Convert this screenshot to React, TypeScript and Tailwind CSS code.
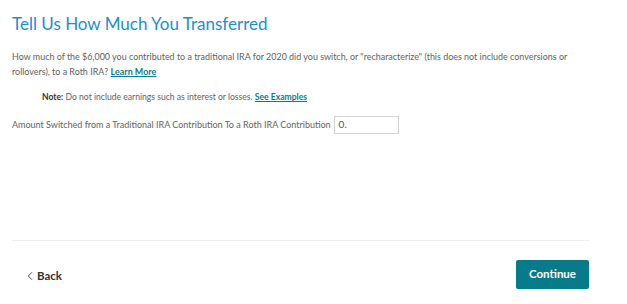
import { ChevronLeft } from 'lucide-react';

export default function App() {
  return (
    <div className="flex h-[304px] w-[627px] flex-col bg-white font-['Lato',sans-serif] text-[#626262]">
      <div className="flex-1 px-3 pt-[12px]">
        <h1 className="text-[17px] leading-6 font-normal text-[#1d8dd3]">
          Tell Us How Much You Transferred
        </h1>
        <p className="mt-[13px] w-[580px] text-[8.95px] leading-[15px]">
          How much of the $6,000 you contributed to a traditional IRA for 2020 did you switch, or
          "recharacterize" (this does not include conversions or rollovers), to a Roth IRA?{' '}
          <a className="font-bold text-[#0b7c8c] underline">Learn More</a>
        </p>
        <p className="mt-[11px] pl-[30px] text-[8.6px] leading-[14px]">
          <span className="font-bold text-[#333]">Note:</span> Do not include earnings such as
          interest or losses. <a className="font-bold text-[#0b7c8c] underline">See Examples</a>
        </p>
        <div className="mt-[11px] flex items-center gap-[3px]">
          <span className="text-[9px]">
            Amount Switched from a Traditional IRA Contribution To a Roth IRA Contribution
          </span>
          <div className="mt-[1px] flex h-[18px] w-[65px] items-end border border-[#d4d4d4] px-1 pb-[1px] text-[10px] text-[#555]">
            0.
          </div>
        </div>
      </div>
      <div className="mx-3 mr-[37px] border-t border-[#eeeeee]" />
      <div className="flex h-[63px] items-center justify-between pr-[38px] pl-[23px]">
        <button className="mt-[6px] flex items-center text-[11.5px] font-bold text-[#333]">
          <ChevronLeft className="h-[14px] w-[14px]" strokeWidth={1.5} />
          Back
        </button>
        <button className="mt-[3px] h-[29px] w-[73px] rounded-[2px] bg-[#077b8a] text-[11.5px] font-bold text-white">
          Continue
        </button>
      </div>
    </div>
  );
}
